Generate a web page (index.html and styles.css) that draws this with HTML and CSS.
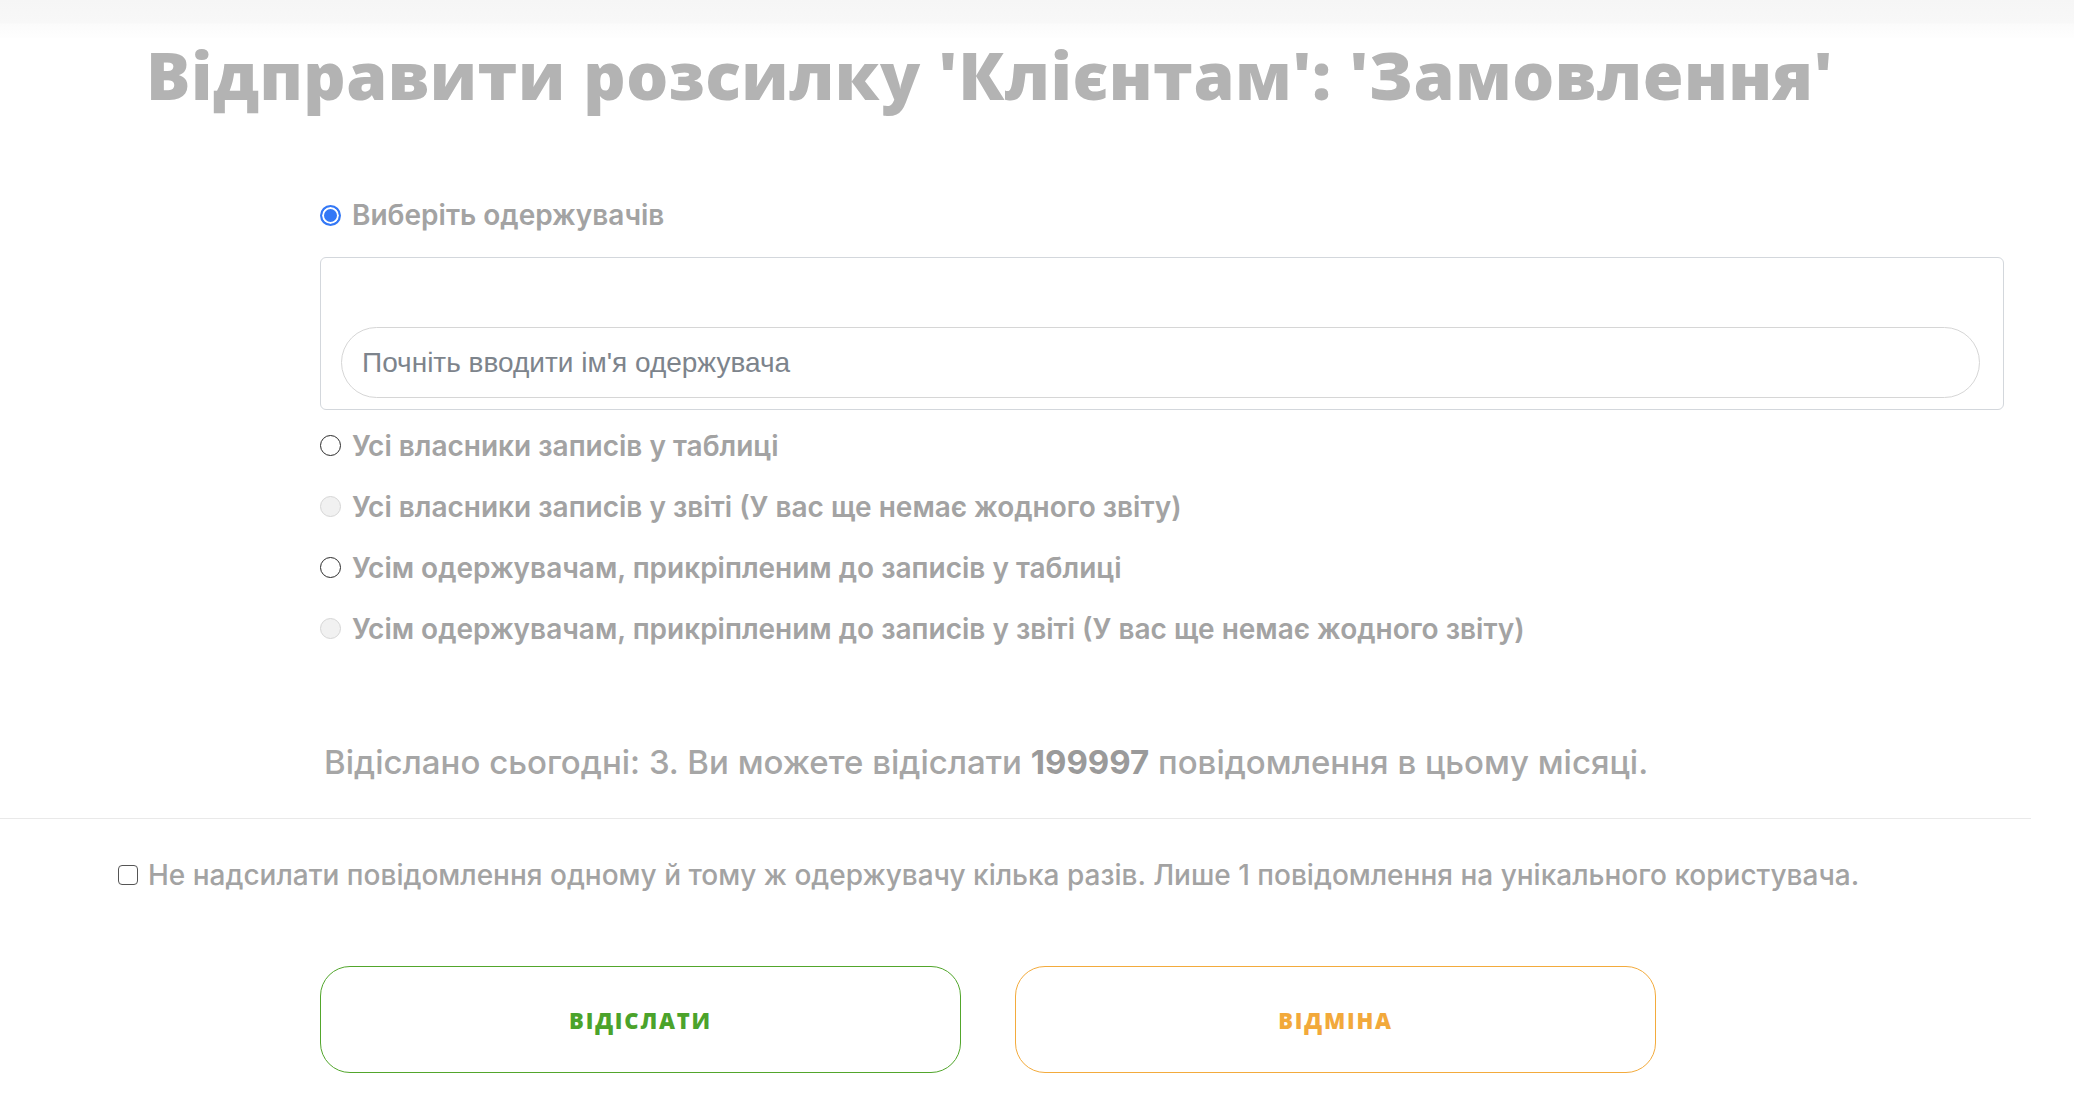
FILE: index.html
```html
<!DOCTYPE html>
<html lang="uk">
<head>
<meta charset="utf-8">
<title>Відправити розсилку</title>
<link rel="stylesheet" href="styles.css">
</head>
<body>
<div class="topbar"></div>
<h1 class="title">Відправити розсилку 'Клієнтам': 'Замовлення'</h1>
<form class="mailing">
  <div class="recipients">
    <label class="option first"><input type="radio" name="target" checked><span>Виберіть одержувачів</span></label>
    <div class="picker">
      <input class="search" type="text" placeholder="Почніть вводити ім'я одержувача">
    </div>
    <label class="option"><input type="radio" name="target"><span>Усі власники записів у таблиці</span></label>
    <label class="option"><input type="radio" name="target" disabled><span>Усі власники записів у звіті (У вас ще немає жодного звіту)</span></label>
    <label class="option"><input type="radio" name="target"><span>Усім одержувачам, прикріпленим до записів у таблиці</span></label>
    <label class="option"><input type="radio" name="target" disabled><span>Усім одержувачам, прикріпленим до записів у звіті (У вас ще немає жодного звіту)</span></label>
  </div>
  <p class="stats">Відіслано сьогодні: 3. Ви можете відіслати <b>199997</b> повідомлення в цьому місяці.</p>
  <hr class="divider">
  <label class="unique"><input type="checkbox"><span>Не надсилати повідомлення одному й тому ж одержувачу кілька разів. Лише 1 повідомлення на унікального користувача.</span></label>
  <div class="actions">
    <button type="button" class="btn send">ВІДІСЛАТИ</button>
    <button type="button" class="btn cancel">ВІДМІНА</button>
  </div>
</form>
</body>
</html>
```
FILE: styles.css
```css
* { box-sizing: border-box; }
html, body { margin: 0; padding: 0; background: #fff; }
body {
  font-family: "Inter", "Liberation Sans", Arial, sans-serif;
  color: #a3a3a3;
  width: 2074px;
  height: 1112px;
  overflow: hidden;
}
.topbar {
  height: 38px;
  background: linear-gradient(to bottom, #f6f6f6 0, #f8f8f8 23px, #fbfbfb 24px, #fefefe 38px);
}
.title {
  margin: 4px 0 0 146px;
  font-family: "Open Sans", "Liberation Sans", sans-serif;
  font-weight: 800;
  font-size: 66px;
  letter-spacing: 0.5px;
  line-height: 64px;
  color: #b3b3b3;
  white-space: nowrap;
}
.mailing { margin: 0; }
.recipients {
  padding-left: 320px;
  width: 2004px;
  display: flex;
  flex-direction: column;
}
.option {
  display: flex;
  align-items: center;
  gap: 11px;
  height: 61px;
  font-size: 28px;
  font-weight: 600;
  color: #a3a3a3;
  white-space: nowrap;
}
.option.first { height: 40px; margin-top: 89px; margin-bottom: 22px; }
.option input {
  appearance: none;
  -webkit-appearance: none;
  margin: 0;
  width: 21px;
  height: 21px;
  flex: none;
  border-radius: 50%;
  border: 1.5px solid #2b2b2b;
  background: #fff;
}
.option input:checked {
  border: 2px solid #3478f6;
  background: #3478f6;
  box-shadow: inset 0 0 0 2px #fff;
}
.option input:disabled {
  border: 1px solid #d6d6d6;
  background: #f1f1f1;
}
.picker {
  border: 1px solid #d3d7dc;
  border-radius: 6px;
  padding: 69px 23px 11px 20px;
  margin-bottom: 5px;
}
.search {
  display: block;
  width: 100%;
  height: 71px;
  border: 1px solid #d6d6d6;
  border-radius: 36px;
  padding: 0 20px;
  font-family: "Liberation Sans", Arial, sans-serif;
  font-size: 28px;
  color: #555;
  background: #fff;
  outline: none;
}
.search::placeholder { color: #7d848c; }
.stats {
  margin: 83px 0 0 324px;
  font-size: 33px;
  line-height: 40px;
  font-weight: 500;
  color: #a6a6a6;
  white-space: nowrap;
}
.stats b { font-weight: 700; color: #9a9a9a; }
.divider {
  margin: 36px 0 0 0;
  width: 2031px;
  border: 0;
  border-top: 1px solid #e9e9e9;
  height: 0;
}
.unique {
  display: flex;
  align-items: center;
  gap: 10px;
  margin: 36px 0 0 118px;
  height: 40px;
  font-size: 28px;
  font-weight: 500;
  color: #a3a3a3;
  white-space: nowrap;
}
.unique input {
  appearance: none;
  -webkit-appearance: none;
  margin: 0;
  width: 20px;
  height: 20px;
  flex: none;
  border: 1.5px solid #555;
  border-radius: 4px;
  background: #fff;
}
.actions {
  display: flex;
  gap: 54px;
  margin: 71px 0 0 320px;
}
.btn {
  width: 641px;
  height: 107px;
  background: #fff;
  border-radius: 30px;
  font-family: "Open Sans", "Liberation Sans", sans-serif;
  font-weight: 800;
  font-size: 22px;
  letter-spacing: 1.8px;
  cursor: pointer;
}
.send { border: 1px solid #52a62c; color: #4ba32b; }
.cancel { border: 1px solid #f3ab3d; color: #f2a93b; }
```
